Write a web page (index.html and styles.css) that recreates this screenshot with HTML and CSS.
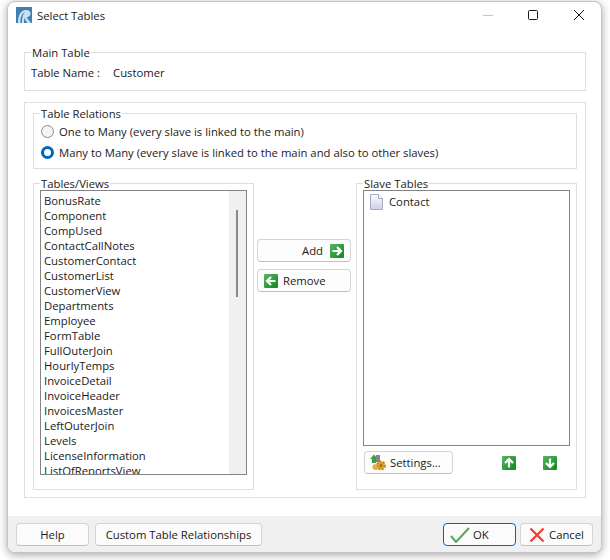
FILE: index.html
```html
<!DOCTYPE html>
<html lang="en">
<head>
    <meta charset="UTF-8">
    <meta name="viewport" content="width=device-width, initial-scale=1.0">
    <title>Select Tables</title>
    <link rel="stylesheet" href="styles.css">
</head>
<body>
    <div class="window">
        <div class="titlebar">
            <svg class="app-icon" width="16" height="16" viewBox="0 0 16 16">
                <defs>
                    <linearGradient id="green" x1="0" y1="0" x2="1" y2="1">
                        <stop offset="0" stop-color="#56b560"/>
                        <stop offset="1" stop-color="#12871f"/>
                    </linearGradient>
                    <linearGradient id="paper" x1="0" y1="0" x2="0" y2="1">
                        <stop offset="0" stop-color="#fbfbfe"/>
                        <stop offset="1" stop-color="#ccd2e6"/>
                    </linearGradient>
                </defs>
                <rect width="16" height="16" fill="#3f7fb8"/>
                <path d="M2 16C2 8 5 3 10 3c3 0 4.500 1.500 4.500 3.500S13 10 10.500 10.500L15 16h-3.500L8 11V16H6C6 10 7 6 10 5.500 7 5 4 9 4.500 16z" fill="#cfe0ef"/>
            </svg>
            <span class="title">Select Tables</span>
            <div class="win-controls">
                <svg width="12" height="12" viewBox="0 0 12 12"><path d="M2 6.500h10" stroke="#c4c4c4" fill="none"/></svg>
                <svg width="12" height="12" viewBox="0 0 12 12"><rect x="1.500" y="1.500" width="9" height="9" rx="1" stroke="#1a1a1a" fill="none"/></svg>
                <svg width="12" height="12" viewBox="0 0 12 12"><path d="M1 1l10 10M11 1L1 11" stroke="#1a1a1a" fill="none"/></svg>
            </div>
        </div>

        <div class="content">
            <fieldset class="group main-table">
                <legend>Main Table</legend>
                <div class="table-name"><span>Table Name :</span><span>Customer</span></div>
            </fieldset>

            <div class="group outer">
                <fieldset class="group relations">
                    <legend>Table Relations</legend>
                    <label class="radio"><input type="radio" name="relation"> One to Many (every slave is linked to the main)</label>
                    <label class="radio"><input type="radio" name="relation" checked> Many to Many (every slave is linked to the main and also to other slaves)</label>
                </fieldset>

                <div class="columns">
                    <fieldset class="group tables">
                        <legend>Tables/Views</legend>
                        <div class="listbox">
                            <ul class="items">
                                <li>BonusRate</li>
                                <li>Component</li>
                                <li>CompUsed</li>
                                <li>ContactCallNotes</li>
                                <li>CustomerContact</li>
                                <li>CustomerList</li>
                                <li>CustomerView</li>
                                <li>Departments</li>
                                <li>Employee</li>
                                <li>FormTable</li>
                                <li>FullOuterJoin</li>
                                <li>HourlyTemps</li>
                                <li>InvoiceDetail</li>
                                <li>InvoiceHeader</li>
                                <li>InvoicesMaster</li>
                                <li>LeftOuterJoin</li>
                                <li>Levels</li>
                                <li>LicenseInformation</li>
                                <li>ListOfReportsView</li>
                            </ul>
                            <div class="scrollbar"><div class="thumb"></div></div>
                        </div>
                    </fieldset>

                    <div class="move-buttons">
                        <button class="btn add">Add
                            <svg width="14" height="14" viewBox="0 0 14 14"><rect width="14" height="14" rx="1" fill="url(#green)"/><path d="M2.500 7h8M7 3l4 4-4 4" stroke="#fff" stroke-width="2.200" fill="none"/></svg>
                        </button>
                        <button class="btn remove">
                            <svg width="14" height="14" viewBox="0 0 14 14"><rect width="14" height="14" rx="1" fill="url(#green)"/><path d="M11.500 7h-8M7 3L3 7l4 4" stroke="#fff" stroke-width="2.200" fill="none"/></svg>
                            Remove
                        </button>
                    </div>

                    <fieldset class="group slaves">
                        <legend>Slave Tables</legend>
                        <div class="listbox slave-list">
                            <div class="slave-item">
                                <svg width="15" height="16" viewBox="0 0 15 16"><path d="M1.500.500h8l4 4v11h-12z" fill="url(#paper)" stroke="#a4abc2"/><path d="M9.500.500v4h4" fill="#fff" stroke="#a4abc2"/></svg>
                                Contact
                            </div>
                        </div>
                        <div class="slave-tools">
                            <button class="btn settings">
                                <svg width="17" height="17" viewBox="0 0 17 17">
                                    <path d="M0 5l4-4.500L8 5H6v4H2V5z" fill="#3c9f45"/>
                                    <path d="M6 1h4v7H6z" fill="#7f8a84"/>
                                    <circle cx="11" cy="11.500" r="3.800" fill="#dca62e" stroke="#c98a16" stroke-width="2.400" stroke-dasharray="2 1.200"/>
                                    <circle cx="11" cy="11.500" r="1.300" fill="#8a6412"/>
                                    <circle cx="5.500" cy="13" r="2.600" fill="#e3b240" stroke="#c98a16" stroke-dasharray="1.500 1"/>
                                </svg>
                                Settings...
                            </button>
                            <svg class="arrow-up" width="14" height="14" viewBox="0 0 14 14"><rect width="14" height="14" rx="1" fill="url(#green)"/><path d="M7 11.500v-8M3 7l4-4 4 4" stroke="#fff" stroke-width="2.200" fill="none"/></svg>
                            <svg class="arrow-down" width="14" height="14" viewBox="0 0 14 14"><rect width="14" height="14" rx="1" fill="url(#green)"/><path d="M7 2.500v8M3 7l4 4 4-4" stroke="#fff" stroke-width="2.200" fill="none"/></svg>
                        </div>
                    </fieldset>
                </div>
            </div>
        </div>

        <div class="footer">
            <button class="btn help">Help</button>
            <button class="btn custom">Custom Table Relationships</button>
            <button class="btn ok">
                <svg width="20" height="16" viewBox="0 0 20 16"><path d="M1 9l5 6L19 1" stroke="#58a85c" stroke-width="2" fill="none"/></svg>
                OK
            </button>
            <button class="btn cancel">
                <svg width="16" height="16" viewBox="0 0 16 16"><path d="M1.500 1.500l13 13M14.500 1.500l-13 13" stroke="#f0403a" stroke-width="2.400" fill="none"/></svg>
                Cancel
            </button>
        </div>
    </div>
</body>
</html>
```

FILE: styles.css
```css
* { box-sizing: border-box; }
html, body { margin: 0; height: 100%; }
body { background-color: #fff; font-family: "Open Sans", "Noto Sans", sans-serif; font-size: 11.3px; color: #1a1a1a; overflow: hidden; }

.window { width: 595px; height: 552px; margin: 1px 0 0 7px; background-color: #fff; border: 1px solid #c4c4c4; border-radius: 8px; box-shadow: 0 2px 8px rgba(0, 0, 0, 0.35); display: flex; flex-direction: column; overflow: hidden; }

.titlebar { height: 30px; flex: none; display: flex; align-items: center; padding: 0 0 4px 8px; }
.app-icon { margin-right: 5px; }
.win-controls { margin-left: auto; display: flex; gap: 34px; padding-right: 16px; }

.content { flex: 1; padding: 13px 15px 0 16px; }

.group { border: 1px solid #dedede; margin: 0; padding: 0; min-width: 0; }
fieldset.group legend { padding: 0 1px; margin: 0 0 -2px 6px; line-height: 15px; }

.main-table { height: 46px; }
.table-name { display: flex; gap: 13px; padding: 7px 0 0 6px; line-height: 15px; }

.outer { height: 396px; margin-top: 11px; padding: 3px 8px 0 8px; }

.relations { height: 63px; padding: 2px 0 0 7px; }
fieldset.relations legend { margin-left: -1px; }
.radio { display: flex; align-items: center; gap: 5px; height: 21px; }
.radio input { appearance: none; width: 13px; height: 13px; margin: 0; border: 1px solid #8a8a8a; border-radius: 50%; background-color: #f4f4f4; }
.radio input:checked { border: 3.5px solid #0067c0; background-color: #fff; }

.columns { display: flex; margin-top: 7px; }

.tables, .slaves { width: 221px; height: 314px; padding: 1px 6px 0 6px; }
fieldset.tables legend, fieldset.slaves legend { margin-left: 0; }
.listbox { border: 1px solid #848484; background-color: #fff; display: flex; }

.tables .listbox { height: 285px; }
.items { list-style: none; margin: 0; padding: 2px 0 0 3px; flex: 1; overflow: hidden; line-height: 15px; }
.scrollbar { width: 17px; background-color: #f0f0f0; padding-top: 19px; }
.thumb { width: 2px; height: 87px; margin-left: 7px; background-color: #8a8a8a; }

.move-buttons { width: 102px; padding: 63px 0 0 3px; display: flex; flex-direction: column; gap: 7px; }

.btn { font: inherit; color: inherit; height: 23px; padding: 0; background-color: #fdfdfd; border: 1px solid #d4d4d4; border-bottom-color: #c0c0c0; border-radius: 4px; display: flex; align-items: center; justify-content: center; }
.add { width: 94px; justify-content: flex-end; gap: 7px; padding-right: 6px; }
.remove { width: 94px; justify-content: flex-start; gap: 5px; padding-left: 6px; }

.slave-list { height: 256px; flex-direction: column; }
.slave-item { display: flex; align-items: center; gap: 5px; padding: 3px 0 0 5px; line-height: 16px; }

.slave-tools { display: flex; align-items: center; margin-top: 5px; padding-left: 1px; }
.settings { width: 89px; gap: 3px; justify-content: flex-start; padding-left: 5px; }
.arrow-up { margin-left: 49px; }
.arrow-down { margin-left: 27px; }

.footer { flex: none; height: 36px; background-color: #f0f0f0; display: flex; align-items: center; padding: 1px 8px 0 8px; }
.help { width: 73px; background-color: #fbfbfb; }
.custom { width: 167px; margin-left: 6px; background-color: #fbfbfb; }
.ok { width: 73px; margin-left: auto; gap: 3px; justify-content: flex-start; padding-left: 6px; background-color: #fbfbfb; border: 1px solid #0067c0; }
.cancel { width: 73px; margin-left: 4px; gap: 4px; background-color: #fbfbfb; }
```
